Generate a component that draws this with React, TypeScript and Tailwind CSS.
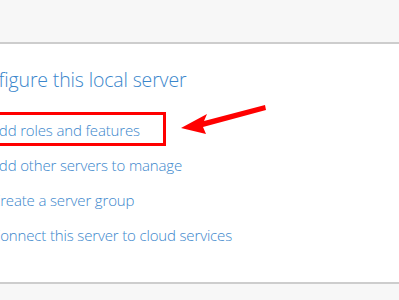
export default function App() {
  const links = [
    { label: "Add roles and features", shift: "-ml-[10px]" },
    { label: "Add other servers to manage", shift: "-ml-[10px]" },
    { label: "Create a server group", shift: "-ml-[9px]" },
    { label: "Connect this server to cloud services", shift: "-ml-[9px]" },
  ];

  return (
    <div className="relative w-[399px] h-[300px] overflow-hidden bg-white flex flex-col" style={{ fontFamily: '"Open Sans", "Noto Sans", sans-serif' }}>
      {/* top band */}
      <div className="h-[44px] bg-[#f7f7f7] border-b-2 border-[#cdcdcd]" />

      {/* quick start */}
      <div className="flex-1 flex flex-col pt-[22px] text-[#3a86cc] font-[350]">
        <div className="-ml-[36px] text-[19.5px] leading-[28px] tracking-[-0.15px] whitespace-nowrap">Configure this local server</div>
        <div className="flex flex-col mt-[19px]">
          {links.map((l, i) => (
            <a key={i} className={`${l.shift} h-[35px] leading-[35px] text-[15px] tracking-[-0.15px] whitespace-nowrap cursor-pointer`}>
              {l.label}
            </a>
          ))}
        </div>
      </div>

      {/* bottom band */}
      <div className="h-[18px] bg-[#f7f7f7] border-t-2 border-[#cdcdcd]" />

      {/* annotation: red highlight */}
      <div className="absolute left-[-10px] top-[112px] w-[176px] h-[34px] border-[3px] border-[#ff0000]" />

      {/* annotation: arrow */}
      <svg className="absolute left-0 top-0" width="399" height="300" viewBox="0 0 399 300">
        <path d="M265 105 L204 121 L207 114 L181 128 L206 134 L203 127 L266 110 Z" fill="#ff0000" />
      </svg>
    </div>
  );
}
